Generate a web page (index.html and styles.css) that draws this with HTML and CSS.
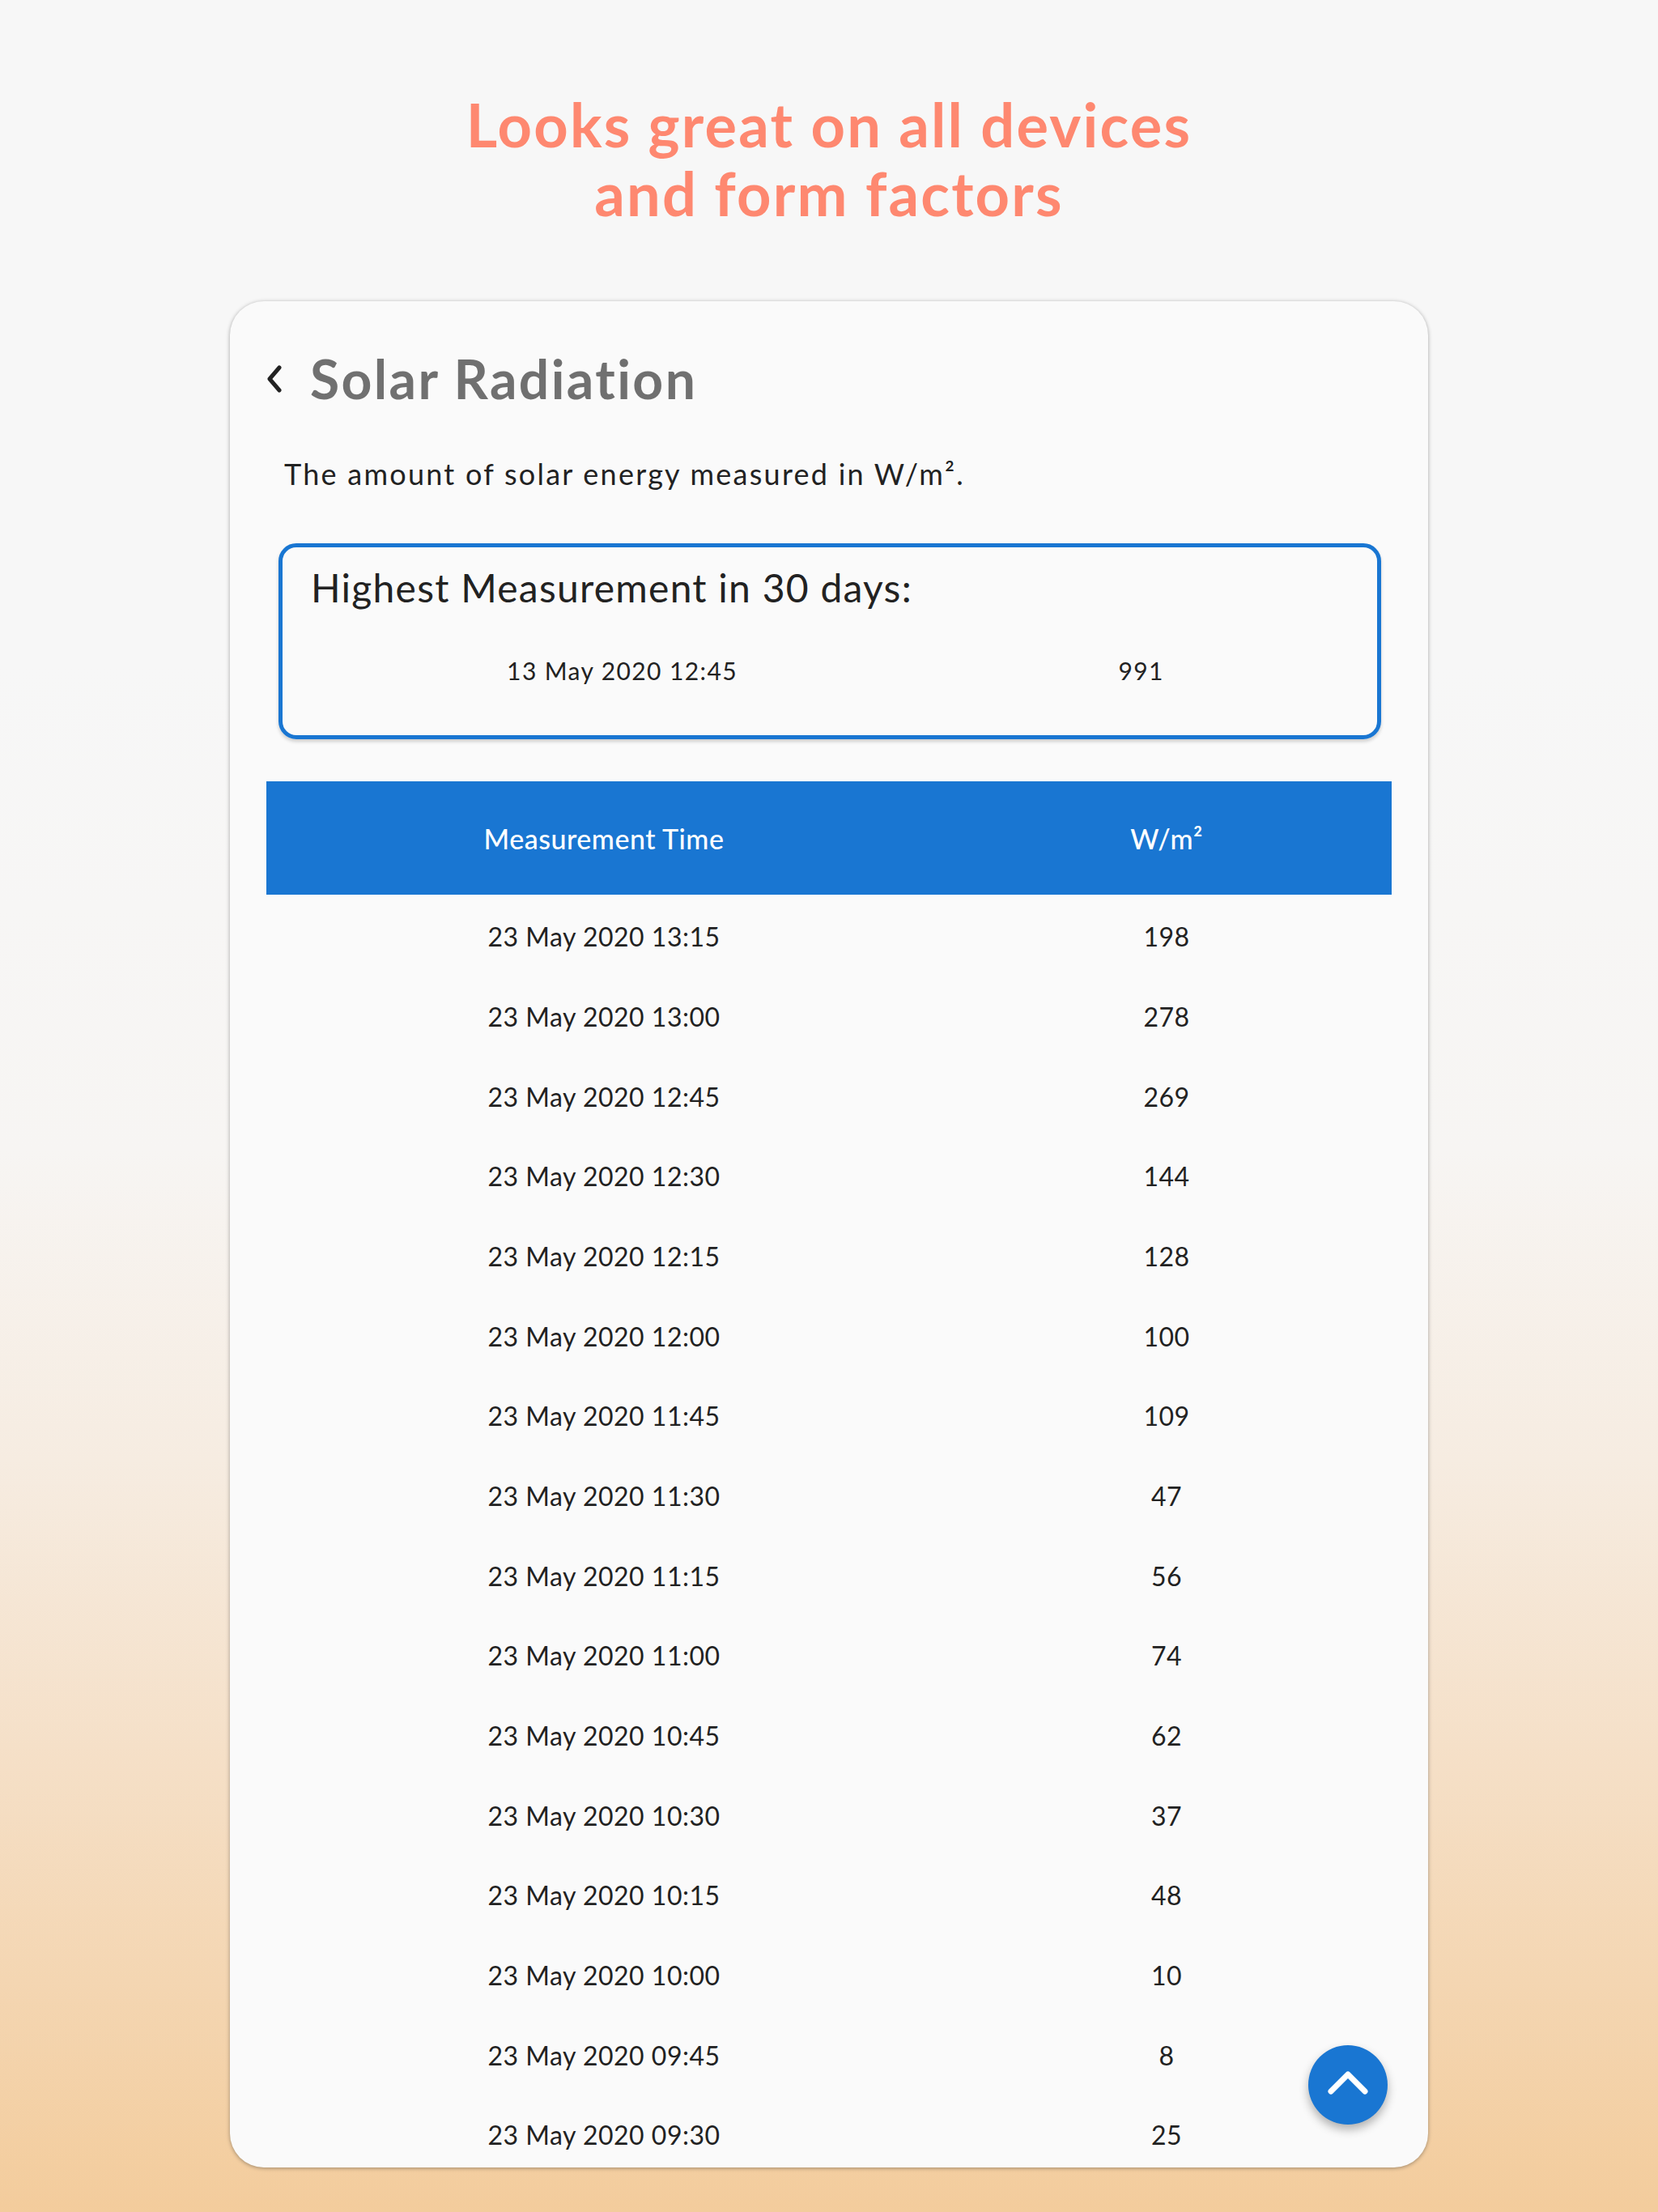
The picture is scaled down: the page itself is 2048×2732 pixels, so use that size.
FILE: index.html
```html
<!DOCTYPE html>
<html lang="en">
<head>
<meta charset="utf-8">
<title>Solar Radiation</title>
<link rel="stylesheet" href="styles.css">
</head>
<body>
<h1 class="headline">Looks great on all devices<br>and form factors</h1>
<main class="card">
  <header class="card-header">
    <svg class="back" width="22" height="34" viewBox="0 0 22 34" aria-hidden="true">
      <path d="M17 3 L5 17 L17 31" fill="none" stroke="#222" stroke-width="5" stroke-linecap="round" stroke-linejoin="round"/>
    </svg>
    <h2 class="title">Solar Radiation</h2>
  </header>
  <p class="subtitle">The amount of solar energy measured in W/m².</p>
  <section class="highest">
    <h3 class="highest-title">Highest Measurement in 30 days:</h3>
    <div class="highest-row">
      <span class="col-time">13 May 2020 12:45</span>
      <span class="col-val">991</span>
    </div>
  </section>
  <div class="table">
    <div class="thead">
      <span class="col-time">Measurement Time</span>
      <span class="col-val">W/m²</span>
    </div>
    <div class="row"><span class="col-time">23 May 2020 13:15</span><span class="col-val">198</span></div>
    <div class="row"><span class="col-time">23 May 2020 13:00</span><span class="col-val">278</span></div>
    <div class="row"><span class="col-time">23 May 2020 12:45</span><span class="col-val">269</span></div>
    <div class="row"><span class="col-time">23 May 2020 12:30</span><span class="col-val">144</span></div>
    <div class="row"><span class="col-time">23 May 2020 12:15</span><span class="col-val">128</span></div>
    <div class="row"><span class="col-time">23 May 2020 12:00</span><span class="col-val">100</span></div>
    <div class="row"><span class="col-time">23 May 2020 11:45</span><span class="col-val">109</span></div>
    <div class="row"><span class="col-time">23 May 2020 11:30</span><span class="col-val">47</span></div>
    <div class="row"><span class="col-time">23 May 2020 11:15</span><span class="col-val">56</span></div>
    <div class="row"><span class="col-time">23 May 2020 11:00</span><span class="col-val">74</span></div>
    <div class="row"><span class="col-time">23 May 2020 10:45</span><span class="col-val">62</span></div>
    <div class="row"><span class="col-time">23 May 2020 10:30</span><span class="col-val">37</span></div>
    <div class="row"><span class="col-time">23 May 2020 10:15</span><span class="col-val">48</span></div>
    <div class="row"><span class="col-time">23 May 2020 10:00</span><span class="col-val">10</span></div>
    <div class="row"><span class="col-time">23 May 2020 09:45</span><span class="col-val">8</span></div>
    <div class="row"><span class="col-time">23 May 2020 09:30</span><span class="col-val">25</span></div>
  </div>
  <button class="fab" type="button" aria-label="Scroll to top">
    <svg width="50" height="30" viewBox="0 0 50 30" aria-hidden="true">
      <path d="M4 26 L25 5 L46 26" fill="none" stroke="#fff" stroke-width="7" stroke-linecap="round" stroke-linejoin="round"/>
    </svg>
  </button>
</main>
</body>
</html>
```

FILE: styles.css
```css
* { box-sizing: border-box; }

html, body {
  margin: 0;
  padding: 0;
}

body {
  width: 2048px;
  height: 2732px;
  overflow: hidden;
  font-family: "Lato", "Noto Sans", sans-serif;
  color: #222;
  background: linear-gradient(to bottom,
    #f7f7f7 0%,
    #f7f7f7 30%,
    #f7f5f3 52%,
    #f6ece1 66%,
    #f5dfc6 80%,
    #f3cc9c 100%);
}

.headline {
  margin: 111px 0 0;
  text-align: center;
  font-size: 74px;
  line-height: 85px;
  font-weight: 700;
  color: #fe8870;
  letter-spacing: 2.2px;
}

.card {
  position: relative;
  width: 1480px;
  height: 2305px;
  margin: 91px auto 0;
  background: #fafafa;
  border-radius: 42px;
  box-shadow: 0 1px 5px rgba(0, 0, 0, 0.35);
  overflow: hidden;
  padding-top: 56px;
}

.card-header {
  display: flex;
  align-items: center;
  height: 80px;
  padding-left: 44px;
  gap: 33px;
}

.back { display: block; }

.title {
  margin: 0;
  font-size: 66px;
  line-height: 80px;
  font-weight: 700;
  color: #707070;
  letter-spacing: 2.4px;
}

.subtitle {
  margin: 55px 0 0 67px;
  font-size: 36px;
  line-height: 44px;
  letter-spacing: 2.25px;
}

.highest {
  margin: 64px 58px 0 60px;
  height: 242px;
  border: 5px solid #1976d2;
  border-radius: 22px;
  padding: 21px 35px 0;
  box-shadow: 0 3px 4px rgba(0, 0, 0, 0.18);
}

.highest-title {
  margin: 0;
  font-size: 48px;
  line-height: 58px;
  font-weight: 400;
  letter-spacing: 1.25px;
}

.highest-row {
  display: flex;
  margin-top: 55px;
  font-size: 30px;
  line-height: 36px;
  letter-spacing: 1.4px;
}

.col-time {
  flex: 0 0 60%;
  text-align: center;
}

.col-val {
  flex: 0 0 40%;
  text-align: center;
}

.table {
  margin: 52px 45px 0;
}

.thead {
  display: flex;
  align-items: center;
  height: 140px;
  background: #1976d2;
  color: #fff;
  font-size: 34px;
  font-weight: 500;
  letter-spacing: 0.5px;
}

.row {
  display: flex;
  align-items: center;
  height: 98.67px;
  padding-top: 5px;
  font-size: 32px;
  letter-spacing: 0.5px;
}

.fab {
  position: absolute;
  right: 50px;
  bottom: 53px;
  width: 98px;
  height: 98px;
  border: none;
  border-radius: 50%;
  background: #1976d2;
  box-shadow: 0 6px 12px rgba(0, 0, 0, 0.3);
  display: flex;
  align-items: center;
  justify-content: center;
  padding: 0 0 6px;
}

.fab svg { display: block; }
```
